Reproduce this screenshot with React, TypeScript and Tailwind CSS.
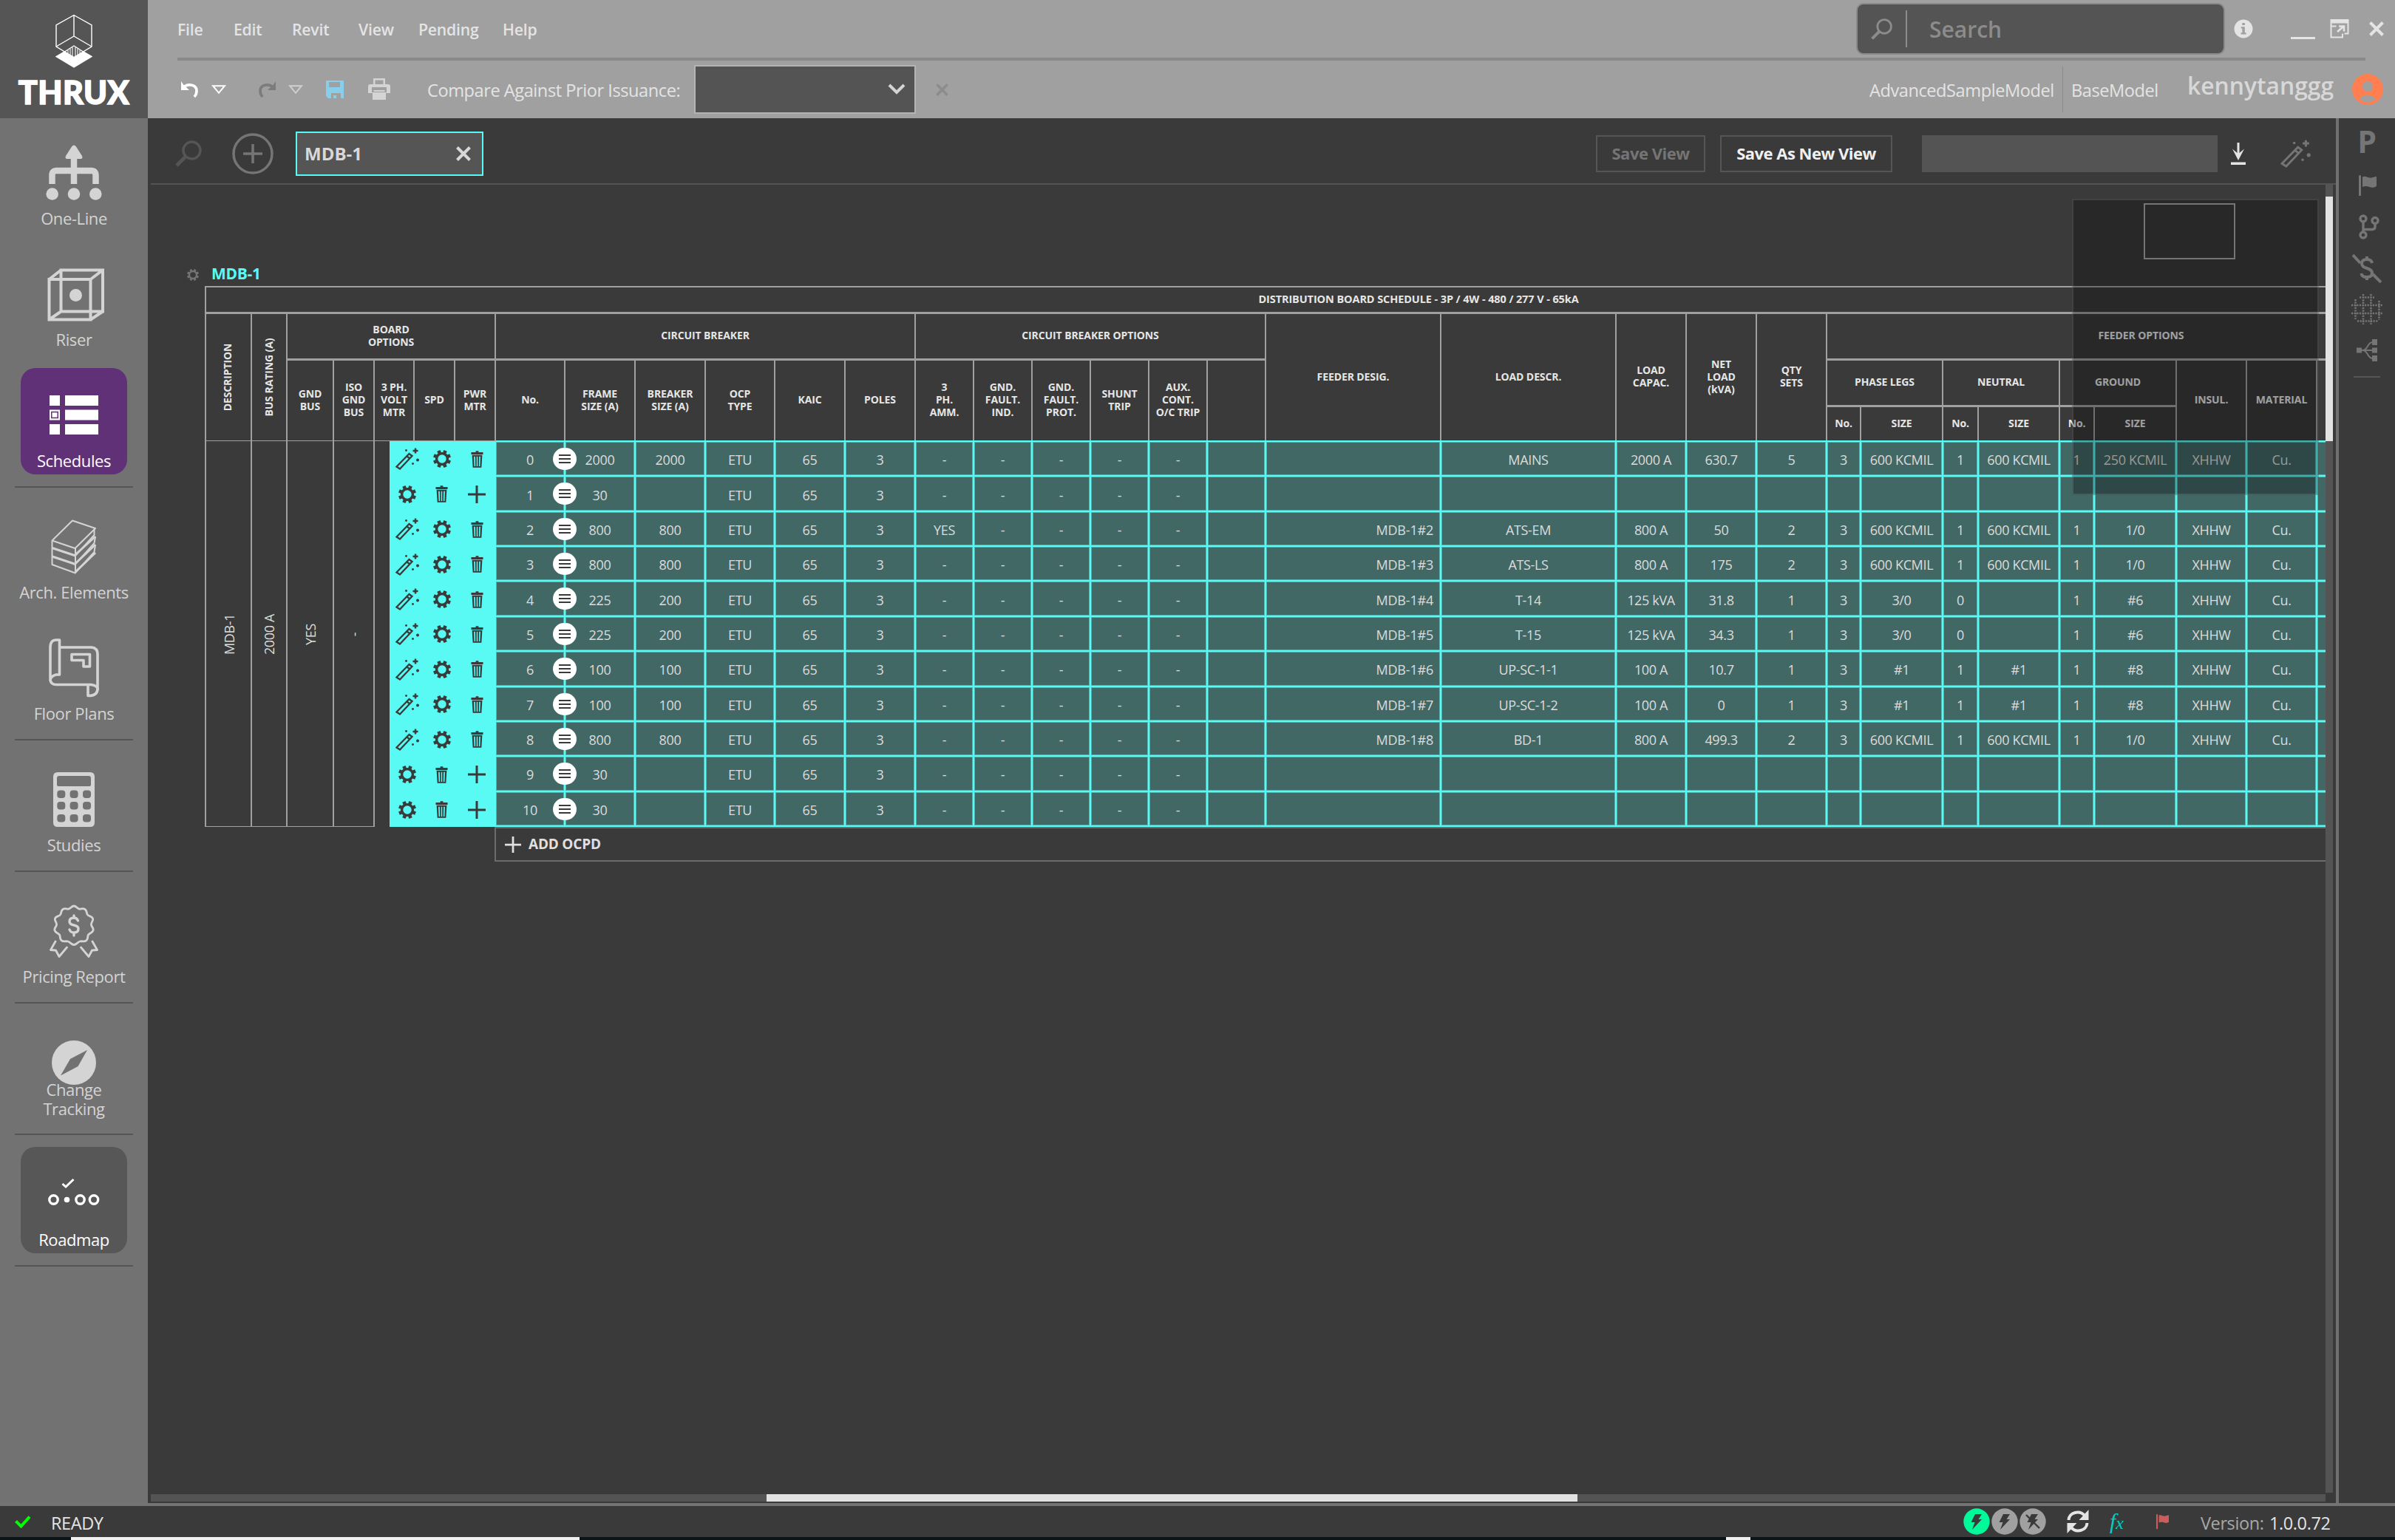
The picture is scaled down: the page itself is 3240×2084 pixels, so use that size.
import type { ReactNode } from "react";
import clsx from "clsx";

type IconProps = { className?: string };

function WandIcon({ className }: IconProps) {
  return (
    <svg viewBox="0 0 32 30" className={className} fill="none" stroke="currentColor" strokeWidth="2.300">
      <path d="M1.500 25.500 18.500 8l4 3L6 28.500Z" />
      <path d="m15.500 11.500 4 3" />
      <path d="M27 .5v7M23.500 4h7" strokeWidth="2.400" />
      <circle cx="30" cy="16.500" r="2" fill="currentColor" stroke="none" />
      <circle cx="23.500" cy="21.500" r="1.400" fill="currentColor" stroke="none" />
      <circle cx="14.500" cy="3.500" r="1.400" fill="currentColor" stroke="none" />
    </svg>
  );
}

function GearIcon({ className }: IconProps) {
  return (
    <svg viewBox="0 0 24 24" className={className} fill="none" stroke="currentColor">
      <circle cx="12" cy="12" r="7.400" strokeWidth="3.400" />
      <g strokeWidth="4.600">
        <path d="M12 0v4M12 20v4M0 12h4M20 12h4" transform="rotate(22.500 12 12)" />
        <path d="M12 0v4M12 20v4M0 12h4M20 12h4" transform="rotate(67.500 12 12)" />
      </g>
    </svg>
  );
}

function TrashIcon({ className }: IconProps) {
  return (
    <svg viewBox="0 0 18 24" className={className} fill="currentColor">
      <path d="M7 0h4v2h6.500v3H.5V2H7Z" />
      <path d="M1.700 6h14.600l-1.100 18H2.800Zm2.600 2 .6 14h1.600L6.200 8Zm3.900 0v14h1.600V8Zm3.600 0-.3 14h1.600l.6-14Z" fillRule="evenodd" />
    </svg>
  );
}

function PlusIcon({ className }: IconProps) {
  return (
    <svg viewBox="0 0 24 24" className={className} stroke="currentColor" strokeWidth="3">
      <path d="M12 0v24M0 12h24" />
    </svg>
  );
}

function CloseIcon({ className }: IconProps) {
  return (
    <svg viewBox="0 0 20 20" className={className} stroke="currentColor" strokeWidth="4">
      <path d="m1.500 1.500 17 17M18.500 1.500l-17 17" />
    </svg>
  );
}

function SearchIcon({ className }: IconProps) {
  return (
    <svg viewBox="0 0 36 36" className={className} fill="none" stroke="currentColor">
      <circle cx="22.500" cy="13.500" r="11.500" strokeWidth="3.500" />
      <path d="M14 22 2 34" strokeWidth="5" />
    </svg>
  );
}

function FlagIcon({ className }: IconProps) {
  return (
    <svg viewBox="0 0 24 28" className={className} fill="currentColor">
      <path d="M0 1.500a1.500 1.500 0 0 1 3 0V27a1 1 0 0 1-3 0ZM5 2.500C9 0 12.500 4.500 17 3.500L24 1.800V15c-5 3-8 1.500-11 .5s-5-.5-8 .5Z" />
    </svg>
  );
}

function UndoIcon({ className }: IconProps) {
  return (
    <svg viewBox="0 0 24 22" className={className} fill="none" stroke="currentColor">
      <path d="M3 8.500C10 2 21 5 21 13c0 3-1.200 6-3.200 8" strokeWidth="3.600" />
      <path d="M0 0v12h11L7.500 8.500 3.500 5Z" fill="currentColor" stroke="none" />
    </svg>
  );
}

function LogoIcon() {
  return (
    <svg viewBox="0 0 50 74" className="h-[74px] w-[50px]" fill="none" stroke="#fff" strokeWidth="1.400">
      <path d="M25 1.500 49 15v29L25 58.500 1 44V15Z" />
      <path d="M25 1.500V30M1 44l24-14 24 14" />
      <path d="M1 57.500 12 51l13 8 13-8 11 6.500L25 72Z" fill="#fff" stroke="#fff" />
      <path d="m12.500 51 12.500-8 12.500 8" />
      <path d="M17 49v5M20 47v9M23 45v12M27 45v12M30 47v9M33 49v5" strokeWidth="1.100" />
    </svg>
  );
}

function OneLineIcon() {
  return (
    <svg viewBox="0 0 76 76" className="h-[76px] w-[76px]" fill="currentColor">
      <path d="M35.300 2q2.700-3 5.400 0l8.300 13q1.500 4-2.500 4h-17q-4 0-2.500-4Z" />
      <path d="M38 15v38M8.500 53V41q0-6 6-6h47q6 0 6 6v12" fill="none" stroke="currentColor" strokeWidth="8.500" />
      <circle cx="8.700" cy="66.500" r="8.300" />
      <circle cx="38" cy="66.500" r="8.300" />
      <circle cx="67.300" cy="66.500" r="8.300" />
    </svg>
  );
}

function RiserIcon() {
  return (
    <svg viewBox="0 0 78 74" className="mt-[4px] ml-[6px] h-[74px] w-[78px]" fill="none" stroke="currentColor" strokeWidth="4">
      <path d="M2.500 15h56v54.500h-56ZM18.500 2.500H75v56H18.500ZM2.500 15l16-12.500M58.500 15 75 2.500M2.500 69.500l16-11M58.500 69.500l16.500-11" />
      <circle cx="38.500" cy="36.500" r="8.500" fill="currentColor" stroke="none" />
    </svg>
  );
}

function SchedulesIcon() {
  return (
    <svg viewBox="0 0 66 54" className="h-[54px] w-[66px]" fill="currentColor">
      <path d="M0 0h14v14H0ZM21 0h45v14H21ZM21 19.500h45v14H21ZM0 39h14v14H0ZM21 39h45v14H21Z" />
      <path d="M0 19.500h14v14H0Zm2 2.200v9.600h10v-9.600Z" fillRule="evenodd" />
      <path d="M3.500 23.300h7v6.400h-7Z" />
    </svg>
  );
}

function ArchIcon() {
  return (
    <svg viewBox="0 0 62 74" className="h-[74px] w-[62px]" fill="none" stroke="currentColor" strokeWidth="2" strokeLinejoin="round">
      <path d="M29 1.500 60 12 32.500 39 1.500 28.500ZM1.500 28.500V61L33 72.500V39" />
      <path d="M1.500 38.500 33 49M1.500 50 33 60.500" strokeWidth="3.200" />
      <path d="M58.500 13v8L33 49M60 23l-1.500 9L33 60.500M60 34l-1.500 10L33 72" />
      <path d="M60 23 33 47.500M60 34 33 59.500M60 45 33 71" strokeWidth="3" />
    </svg>
  );
}

function FloorIcon() {
  return (
    <svg viewBox="0 0 68 80" className="h-[80px] w-[68px]" fill="none" stroke="currentColor" strokeWidth="3.600" strokeLinejoin="round">
      <path d="M14.500 2v47H10Q2 51 2 57V12Q2 2 10 2ZM2 56Q3 62.500 10 62.500h47q9 1 9.500 7" />
      <path d="M14.500 12H58q8 1 8 9v48q-1 9-13 8.500V63" />
      <path d="M31 21.500h24.500V38H47v-8.500H31Z" />
    </svg>
  );
}

function StudiesIcon() {
  return (
    <svg viewBox="0 0 56 74" className="h-[74px] w-[56px]" fill="currentColor">
      <path
        d="M6 0h44q6 0 6 6v62q0 6-6 6H6q-6 0-6-6V6q0-6 6-6Zm2 5Q5 5 5 8v9q0 2 3 2h40q3 0 3-2V8q0-3-3-3Z"
        fillRule="evenodd"
      />
      <g fill="#727272">
        {[24.500, 40, 57].map((y) =>
          [5.300, 22.600, 40].map((x) => <rect key={`${x}-${y}`} x={x} y={y} width="11" height="10.500" rx="4" />)
        )}
      </g>
    </svg>
  );
}

function PricingIcon() {
  return (
    <svg viewBox="0 0 66 72" className="h-[72px] w-[66px]" fill="none" stroke="currentColor" strokeWidth="2.800" strokeLinecap="round" strokeLinejoin="round">
      <path d="M33 2c3.500 0 4 3.500 7 4s5-1.500 8 .5 1.500 5 3.500 7.500 6 1.500 7 5-2.500 5-2 8.500 3.500 4 2.500 7.500-5 3.500-6.500 6 0 6-3 8-5 0-8.500 1-4.500 4.500-8 4.500-4.500-3.500-8-4.500-5.500 1-8.500-1-1.500-5.500-3-8-5.500-2.500-6.500-6 2-4 2.500-7.500-3-5-2-8.500 5-2.500 7-5 .5-5.500 3.500-7.500 5 0 8-.5 3.500-4 7-4Z" />
      <path d="M38.500 22q-1.500-4-5.500-4-6 0-6 5 0 4 6 5t6 5q0 5-6 5-4.500 0-6-4M33 15v3M33 38v4" strokeWidth="3.400" />
      <path d="M8 50 1.500 61.500l7 .5 4.500 8.500L23.500 58M58 50l6.500 11.500-7 .5-4.500 8.500L42.500 58" />
    </svg>
  );
}

function CompassIcon() {
  return (
    <svg viewBox="0 0 60 60" className="h-[60px] w-[60px]">
      <circle cx="30" cy="30" r="30" fill="currentColor" />
      <path d="M48 13 35.500 35 12 47.500 25 25Z" fill="#727272" />
    </svg>
  );
}

function RoadmapIcon() {
  return (
    <svg viewBox="0 0 70 38" className="-mt-[6px] h-[38px] w-[70px]" fill="none" stroke="currentColor">
      <path d="m19.500 8 4.500 4L34.500 2" strokeWidth="3" />
      <circle cx="7.500" cy="29.500" r="5.700" strokeWidth="3.400" />
      <circle cx="25.500" cy="29.500" r="3.800" fill="currentColor" stroke="none" />
      <circle cx="43.500" cy="29.500" r="5.700" strokeWidth="3.400" />
      <circle cx="62" cy="29.500" r="5.700" strokeWidth="3.400" />
    </svg>
  );
}

function NavItem({ label, icon, tone, lines = 1 }: { label: string; icon: ReactNode; tone?: "active" | "dim"; lines?: number }) {
  return (
    <div
      className={clsx(
        "mx-[28px] my-[10px] flex h-[144px] flex-col items-center rounded-[20px]",
        tone === "active" && "bg-[#613178] text-white",
        tone === "dim" && "bg-[#575757] text-white",
        !tone && "text-[#d4d4d4]"
      )}
    >
      <div className="flex h-[128px] w-full shrink-0 items-center justify-center">{icon}</div>
      <p
        className={clsx(
          "w-[160px] shrink-0 text-center text-[22px] tracking-[-0.4px]",
          lines === 2 ? "-mt-[41px] px-[20px] leading-[26px]" : "-mt-[17px] leading-[28px]"
        )}
      >
        {label}
      </p>
    </div>
  );
}

function NavRule() {
  return <div className="mx-[20px] my-[6px] h-[2px] bg-[#555555]" />;
}

function Sidebar() {
  return (
    <nav className="flex w-[200px] shrink-0 flex-col bg-[#727272]">
      <NavItem label="One-Line" icon={<OneLineIcon />} />
      <NavItem label="Riser" icon={<RiserIcon />} />
      <NavItem label="Schedules" icon={<SchedulesIcon />} tone="active" />
      <NavRule />
      <NavItem label="Arch. Elements" icon={<ArchIcon />} />
      <NavItem label="Floor Plans" icon={<FloorIcon />} />
      <NavRule />
      <NavItem label="Studies" icon={<StudiesIcon />} />
      <NavRule />
      <NavItem label="Pricing Report" icon={<PricingIcon />} />
      <NavRule />
      <NavItem label="Change Tracking" icon={<CompassIcon />} lines={2} />
      <NavRule />
      <NavItem label="Roadmap" icon={<RoadmapIcon />} tone="dim" />
      <NavRule />
    </nav>
  );
}

function MenuBar() {
  return (
    <div className="flex h-[78px] items-center">
      <div className="flex w-[2271px] pt-px text-[21.200px] font-semibold tracking-[-0.2px] text-[#e4e4e4]">
        <span className="w-[76px]">File</span>
        <span className="w-[79px]">Edit</span>
        <span className="w-[90px]">Revit</span>
        <span className="w-[81px]">View</span>
        <span className="w-[114px]">Pending</span>
        <span>Help</span>
      </div>
      <div className="flex h-[70px] w-[499px] items-center rounded-[10px] border-2 border-[#8a8a8a] bg-[#545454] text-[#8c8c8c]">
        <SearchIcon className="ml-[18px] h-[29px] w-[29px]" />
        <div className="ml-[18px] h-[50px] w-[2px] bg-[#8c8c8c]" />
        <span className="ml-[30px] text-[30px] font-semibold">Search</span>
      </div>
      <div className="ml-[12px] flex items-center text-[#e4e4e4]">
        <svg viewBox="0 0 26 26" className="h-[26px] w-[26px]">
          <circle cx="13" cy="13" r="12.500" fill="currentColor" />
          <path d="M11.300 5h3.600v3h-3.600ZM9.800 10.300h5v8h1.800v2.200H9.600v-2.200h1.800v-5.700H9.800Z" fill="#a0a0a0" />
        </svg>
        <div className="mt-[25px] ml-[51px] h-[3px] w-[33px] bg-[#e4e4e4]" />
        <svg viewBox="0 0 26 26" className="ml-[20px] h-[26px] w-[26px]" fill="none" stroke="currentColor" strokeWidth="2">
          <path d="M1.500 9V1h23v18.500h-5" />
          <path d="M1 3h24" strokeWidth="5" />
          <path d="M8.500 9.500h-7v15H17v-5" />
          <path d="m10 17 8-7M12 9.500h7v7" strokeWidth="2.600" />
        </svg>
        <CloseIcon className="ml-[27px] h-[20px] w-[20px]" />
      </div>
    </div>
  );
}

function Triangle({ className }: IconProps) {
  return (
    <svg viewBox="0 0 20 13" className={className} fill="none" stroke="currentColor" strokeWidth="2">
      <path d="M2 1.200h16l-8 9.600Z" />
    </svg>
  );
}

function ToolBar() {
  return (
    <div className="flex h-[78px] items-center text-[23.600px] tracking-[-0.45px] text-[#e4e4e4]">
      <UndoIcon className="ml-[5px] h-[22px] w-[24px] text-white" />
      <Triangle className="ml-[17px] h-[13px] w-[20px] text-white" />
      <UndoIcon className="ml-[43px] h-[22px] w-[24px] -scale-x-100 text-[#7c7c7c]" />
      <Triangle className="ml-[17px] h-[13px] w-[20px] text-[#cfcfcf]" />
      <svg viewBox="0 0 24 24" className="ml-[31px] h-[24px] w-[24px]" fill="#87ceeb">
        <path d="M0 0h24v24h-4v-7H7v7H3l-3-3Zm4 2v7h15V2Z" fillRule="evenodd" />
        <path d="M10 20h4v4h-4Z" />
      </svg>
      <svg viewBox="0 0 30 30" className="ml-[33px] h-[30px] w-[30px]" fill="#d4d4d4">
        <path d="M7 0h16v8h4q3 0 3 3v9h-6v9H6v-9H0v-9q0-3 3-3h4Zm2.500 2.500V8h11V2.500ZM5 12v7h20v-7Z" fillRule="evenodd" />
        <path d="M7.500 16h15v2h-15Z" />
      </svg>
      <span className="ml-[50px] w-[361px] pt-[3px]">Compare Against Prior Issuance:</span>
      <div className="flex h-[66px] w-[300px] items-center justify-end border-2 border-[#b4b4b4] bg-[#545454] pr-[12px]">
        <svg viewBox="0 0 24 16" className="h-[16px] w-[24px]" fill="none" stroke="#d4d4d4" strokeWidth="4">
          <path d="m2 2 10 10L22 2" />
        </svg>
      </div>
      <CloseIcon className="ml-[27px] h-[17px] w-[17px] text-[#8c8c8c]" />
      <span className="ml-[1246px] w-[261px] pt-[3px]">AdvancedSampleModel</span>
      <div className="h-[62px] w-px bg-[#8a8a8a]" />
      <span className="ml-[11px] w-[157px] pt-[3px]">BaseModel</span>
      <span className="-mt-[10px] w-[223px] text-[31.800px] font-semibold tracking-normal text-[#d8d8d8]">kennytanggg</span>
      <svg viewBox="0 0 42 42" className="h-[42px] w-[42px]">
        <circle cx="21" cy="21" r="21" fill="#ff7f50" />
        <circle cx="21" cy="17" r="7" fill="#a0a0a0" />
        <path d="M10 34q5-6 11-5.500T32 34q-5 4.500-11 4.500T10 34Z" fill="#a0a0a0" />
      </svg>
    </div>
  );
}

function Header() {
  return (
    <header className="flex h-[160px] shrink-0 bg-[#a0a0a0]">
      <div className="flex w-[200px] flex-col items-center bg-[#555555] pt-[19px] text-white">
        <LogoIcon />
        <span className="mt-[10px] font-['Lato'] text-[43px] leading-[44px] font-black tracking-[0.5px] [-webkit-text-stroke:1.5px_white]">THRUX</span>
      </div>
      <div className="flex w-[3040px] flex-col pl-[40px]">
        <MenuBar />
        <div className="h-[4px] w-[2960px] bg-[#898989]" />
        <ToolBar />
      </div>
    </header>
  );
}

function ViewBar() {
  return (
    <div className="flex h-[88px] w-[2948px] shrink-0 items-center pt-[8px] pl-[33px] text-[22px] font-bold tracking-[-0.5px]">
      <SearchIcon className="h-[36px] w-[36px] text-[#555555]" />
      <svg viewBox="0 0 56 56" className="ml-[41px] h-[56px] w-[56px]" fill="none" stroke="#757575" strokeWidth="3.500">
        <circle cx="28" cy="28" r="26" />
        <path d="M28 15v26M15 28h26" />
      </svg>
      <div className="ml-[30px] flex h-[60px] w-[254px] items-center border-2 border-[#58faf3] bg-[#555555] pl-[10px] text-[#d8d8d8]">
        <span className="w-[205px] pb-px text-[24px] tracking-normal">MDB-1</span>
        <CloseIcon className="h-[20px] w-[20px]" />
      </div>
      <div className="ml-[1505px] flex h-[50px] w-[148px] items-center justify-center border-2 border-[#555555] pb-px text-[#757575]">Save View</div>
      <div className="ml-[20px] flex h-[50px] w-[233px] items-center justify-center border-2 border-[#555555] pb-px text-[#f0f0f0]">Save As New View</div>
      <div className="ml-[40px] h-[50px] w-[400px] bg-[#545454]" />
      <svg viewBox="0 0 20 30" className="ml-[18px] h-[30px] w-[20px]" fill="#e4e4e4">
        <path d="M8.500 0h3v14l6.500-5.500L10 24 2 8.500 8.500 14ZM0 26.500h20V30H0Z" />
      </svg>
      <WandIcon className="ml-[47px] h-[38px] w-[41px] text-[#757575]" />
    </div>
  );
}

const HEADERS = [
  { text: "BOARD\nOPTIONS", cell: "col-start-3 col-span-5 row-start-1" },
  { text: "GND\nBUS", cell: "col-start-3 row-start-2 row-span-2" },
  { text: "ISO\nGND\nBUS", cell: "col-start-4 row-start-2 row-span-2" },
  { text: "3 PH.\nVOLT\nMTR", cell: "col-start-5 row-start-2 row-span-2" },
  { text: "SPD", cell: "col-start-6 row-start-2 row-span-2" },
  { text: "PWR\nMTR", cell: "col-start-7 row-start-2 row-span-2" },
  { text: "CIRCUIT BREAKER", cell: "col-start-8 col-span-6 row-start-1" },
  { text: "No.", cell: "col-start-8 row-start-2 row-span-2" },
  { text: "FRAME\nSIZE (A)", cell: "col-start-9 row-start-2 row-span-2" },
  { text: "BREAKER\nSIZE (A)", cell: "col-start-10 row-start-2 row-span-2" },
  { text: "OCP\nTYPE", cell: "col-start-11 row-start-2 row-span-2" },
  { text: "KAIC", cell: "col-start-12 row-start-2 row-span-2" },
  { text: "POLES", cell: "col-start-13 row-start-2 row-span-2" },
  { text: "CIRCUIT BREAKER OPTIONS", cell: "col-start-14 col-span-6 row-start-1" },
  { text: "3\nPH.\nAMM.", cell: "col-start-14 row-start-2 row-span-2" },
  { text: "GND.\nFAULT.\nIND.", cell: "col-start-15 row-start-2 row-span-2" },
  { text: "GND.\nFAULT.\nPROT.", cell: "col-start-16 row-start-2 row-span-2" },
  { text: "SHUNT\nTRIP", cell: "col-start-17 row-start-2 row-span-2" },
  { text: "AUX.\nCONT.\nO/C TRIP", cell: "col-start-18 row-start-2 row-span-2" },
  { text: "", cell: "col-start-19 row-start-2 row-span-2" },
  { text: "FEEDER DESIG.", cell: "col-start-20 row-start-1 row-span-3" },
  { text: "LOAD DESCR.", cell: "col-start-21 row-start-1 row-span-3" },
  { text: "LOAD\nCAPAC.", cell: "col-start-22 row-start-1 row-span-3" },
  { text: "NET\nLOAD\n(kVA)", cell: "col-start-23 row-start-1 row-span-3" },
  { text: "QTY\nSETS", cell: "col-start-24 row-start-1 row-span-3" },
  { text: "FEEDER OPTIONS", cell: "col-start-25 col-span-9 row-start-1" },
  { text: "PHASE LEGS", cell: "col-start-25 col-span-2 row-start-2" },
  { text: "No.", cell: "col-start-25 row-start-3" },
  { text: "SIZE", cell: "col-start-26 row-start-3" },
  { text: "NEUTRAL", cell: "col-start-27 col-span-2 row-start-2" },
  { text: "No.", cell: "col-start-27 row-start-3" },
  { text: "SIZE", cell: "col-start-28 row-start-3" },
  { text: "GROUND", cell: "col-start-29 col-span-2 row-start-2" },
  { text: "No.", cell: "col-start-29 row-start-3" },
  { text: "SIZE", cell: "col-start-30 row-start-3" },
  { text: "INSUL.", cell: "col-start-31 row-start-2 row-span-2" },
  { text: "MATERIAL", cell: "col-start-32 row-start-2 row-span-2" },
  { text: "", cell: "col-start-33 row-start-2 row-span-2" },
];

type Circuit = {
  no: number;
  frame: string;
  breaker?: string;
  phAmm?: string;
  desig?: string;
  load?: string[];
  feeder?: string[];
};

// load: description, capacity, net kVA, qty sets
// feeder: phase no/size, neutral no/size, ground no/size, insulation, material
const CIRCUITS: Circuit[] = [
  { no: 0, frame: "2000", breaker: "2000", load: ["MAINS", "2000 A", "630.7", "5"], feeder: ["3", "600 KCMIL", "1", "600 KCMIL", "1", "250 KCMIL", "XHHW", "Cu."] },
  { no: 1, frame: "30" },
  { no: 2, frame: "800", breaker: "800", phAmm: "YES", desig: "MDB-1#2", load: ["ATS-EM", "800 A", "50", "2"], feeder: ["3", "600 KCMIL", "1", "600 KCMIL", "1", "1/0", "XHHW", "Cu."] },
  { no: 3, frame: "800", breaker: "800", desig: "MDB-1#3", load: ["ATS-LS", "800 A", "175", "2"], feeder: ["3", "600 KCMIL", "1", "600 KCMIL", "1", "1/0", "XHHW", "Cu."] },
  { no: 4, frame: "225", breaker: "200", desig: "MDB-1#4", load: ["T-14", "125 kVA", "31.8", "1"], feeder: ["3", "3/0", "0", "", "1", "#6", "XHHW", "Cu."] },
  { no: 5, frame: "225", breaker: "200", desig: "MDB-1#5", load: ["T-15", "125 kVA", "34.3", "1"], feeder: ["3", "3/0", "0", "", "1", "#6", "XHHW", "Cu."] },
  { no: 6, frame: "100", breaker: "100", desig: "MDB-1#6", load: ["UP-SC-1-1", "100 A", "10.7", "1"], feeder: ["3", "#1", "1", "#1", "1", "#8", "XHHW", "Cu."] },
  { no: 7, frame: "100", breaker: "100", desig: "MDB-1#7", load: ["UP-SC-1-2", "100 A", "0", "1"], feeder: ["3", "#1", "1", "#1", "1", "#8", "XHHW", "Cu."] },
  { no: 8, frame: "800", breaker: "800", desig: "MDB-1#8", load: ["BD-1", "800 A", "499.3", "2"], feeder: ["3", "600 KCMIL", "1", "600 KCMIL", "1", "1/0", "XHHW", "Cu."] },
  { no: 9, frame: "30" },
  { no: 10, frame: "30" },
];

const DESIG_COLUMN = 12;

function circuitCells(c: Circuit) {
  return [
    String(c.no),
    c.frame,
    c.breaker ?? "",
    "ETU",
    "65",
    "3",
    c.phAmm ?? "-",
    "-",
    "-",
    "-",
    "-",
    "",
    c.desig ?? "",
    ...(c.load ?? ["", "", "", ""]),
    ...(c.feeder ?? ["", "", "", "", "", "", "", ""]),
    "",
  ];
}

function VerticalCell({ children, className }: { children?: ReactNode; className?: string }) {
  return (
    <div className={clsx("flex items-center justify-center bg-[#3a3a3a]", className)}>
      <span className="-rotate-90 whitespace-nowrap">{children}</span>
    </div>
  );
}

function TableHead() {
  return (
    <div className="grid w-[3046px] grid-cols-[60px_46px_61px_53px_52px_53px_53px_92px_93px_93px_92px_93px_93px_77px_77px_77px_77px_77px_77px_235px_235px_93px_93px_93px_44px_109px_46px_108px_45px_109px_93px_93px_186px] grid-rows-[60px_60px_45px] gap-x-[2px] gap-y-[3px] bg-[#a0a0a0] pl-[2px] text-[14px] leading-[17px] font-bold tracking-[-0.1px] text-[#e6e6e6]">
      <VerticalCell className="col-start-1 row-span-3 row-start-1 pr-[2px]">DESCRIPTION</VerticalCell>
      <VerticalCell className="col-start-2 row-span-3 row-start-1">BUS RATING (A)</VerticalCell>
      {HEADERS.map((h, i) => (
        <div key={i} className={clsx("flex items-center justify-center bg-[#3a3a3a] pb-[3px] text-center whitespace-pre", h.cell)}>
          {h.text}
        </div>
      ))}
    </div>
  );
}

function RowActions({ spare }: { spare: boolean }) {
  return (
    <div className="flex items-center pt-px text-[#3a3a3a]">
      <div className="flex w-[47px] justify-center">
        {spare ? <GearIcon className="h-[24px] w-[24px]" /> : <WandIcon className="h-[30px] w-[32px]" />}
      </div>
      <div className="flex w-[47px] justify-center">
        {spare ? <TrashIcon className="h-[23px] w-[17px]" /> : <GearIcon className="h-[24px] w-[24px]" />}
      </div>
      <div className="flex w-[48px] justify-center">
        {spare ? <PlusIcon className="h-[24px] w-[24px]" /> : <TrashIcon className="h-[23px] w-[17px]" />}
      </div>
    </div>
  );
}

function TableBody() {
  return (
    <div className="flex h-[523px] text-[18px] tracking-[-0.35px] text-[#dcdcdc]">
      <div className="grid shrink-0 grid-cols-[60px_46px_61px_53px_164px] gap-x-[2px] bg-[#a0a0a0] pt-px pb-px pl-[2px]">
        <VerticalCell className="pt-[2px] pl-[4px]">MDB-1</VerticalCell>
        <VerticalCell className="pt-[2px] pl-[2px]">2000 A</VerticalCell>
        <VerticalCell className="pt-[2px] pl-[2px]">YES</VerticalCell>
        <VerticalCell className="pt-[2px] pl-[2px]">-</VerticalCell>
        <div className="-mb-px bg-[#3a3a3a] pl-[20px]">
          <div className="grid h-full w-[144px] grid-rows-[repeat(11,1fr)] bg-[#58faf3]">
            {CIRCUITS.map((c) => (
              <RowActions key={c.no} spare={!c.load} />
            ))}
          </div>
        </div>
      </div>
      <div className="grid h-[523px] shrink-0 grid-cols-[92px_93px_93px_92px_93px_93px_77px_77px_77px_77px_77px_77px_235px_235px_93px_93px_93px_44px_109px_46px_108px_45px_109px_93px_93px_186px] grid-rows-[repeat(11,1fr)] gap-[2px] bg-[#58faf3] py-[2px]">
        {CIRCUITS.map((c) =>
          circuitCells(c).map((text, col) => (
            <div
              key={`${c.no}-${col}`}
              className={clsx(
                "relative flex items-center border border-[#4fb4b0] bg-[#426866] pt-[4px] whitespace-nowrap",
                col === DESIG_COLUMN ? "justify-end pr-[8px] tracking-[-0.2px]" : "justify-center"
              )}
            >
              {text}
              {col === 0 && (
                <div className="absolute top-[7px] -right-[18px] z-10 flex h-[30px] w-[32px] flex-col items-center justify-center gap-[3px] rounded-full bg-white">
                  <i className="h-[2px] w-[16px] bg-[#3a3a3a]" />
                  <i className="h-[2px] w-[16px] bg-[#3a3a3a]" />
                  <i className="h-[2px] w-[16px] bg-[#3a3a3a]" />
                </div>
              )}
            </div>
          ))
        )}
      </div>
    </div>
  );
}

function Schedule() {
  return (
    <section className="ml-[73px] w-[2869px] overflow-hidden pt-[109px]">
      <div className="flex h-[28px] items-center pb-[5px]">
        <span className="pl-[9px] text-[21px] leading-none font-bold tracking-[-0.3px] text-[#58faf3]">MDB-1</span>
      </div>
      <div className="flex h-[38px] w-[3284px] items-center justify-center border-2 border-b-3 border-[#a0a0a0] pb-px text-[14.500px] font-bold tracking-[-0.1px] text-[#e6e6e6]">
        DISTRIBUTION BOARD SCHEDULE - 3P / 4W - 480 / 277 V - 65kA
      </div>
      <TableHead />
      <TableBody />
      <div className="ml-[392px] flex h-[47px] items-center border-y-2 border-l-2 border-[#6c6c6c] pl-[12px] text-[19px] font-bold tracking-[-0.2px] text-[#e0e0e0]">
        <PlusIcon className="mr-[10px] h-[22px] w-[22px]" />
        ADD OCPD
      </div>
    </section>
  );
}

function Canvas() {
  return (
    <div className="relative flex h-[1786px] w-[2956px] flex-col border-t-2 border-[#545454]">
      <div className="flex flex-1">
        <div className="relative h-[1772px] w-[2942px] overflow-hidden">
          <GearIcon className="absolute top-[114px] left-[49px] h-[16px] w-[16px] text-[#757575]" />
          <Schedule />
          <div className="absolute top-[19px] left-[2599px] h-[401px] w-[334px] border-2 border-white/12 bg-black/30 pt-[4px] pl-[95px]">
            <div className="h-[76px] w-[124px] border-2 border-[#757575]" />
          </div>
        </div>
        <div className="h-[1770px] w-[10px] bg-[#545454] pt-[16px]">
          <div className="h-[331px] bg-[#e2e2e2]" />
        </div>
      </div>
      <div className="h-[10px] w-[2942px] bg-[#545454] pl-[833px]">
        <div className="h-[10px] w-[1097px] bg-[#e2e2e2]" />
      </div>
      <div className="h-[4px]" />
    </div>
  );
}

function RightRail() {
  return (
    <aside className="flex w-[80px] shrink-0 flex-col items-center border-l-4 border-[#707070] pt-[15px] text-[#757575]">
      <span className="text-[41px] leading-[32px] font-bold">P</span>
      <FlagIcon className="mt-[30px] ml-[2px] h-[28px] w-[24px]" />
      <svg viewBox="0 0 28 34" className="mt-[25px] ml-[6px] h-[34px] w-[28px]" fill="none" stroke="currentColor" strokeWidth="3.400">
        <circle cx="6" cy="6" r="4" />
        <circle cx="6" cy="28" r="4" />
        <circle cx="22" cy="8.500" r="4" />
        <path d="M6 10v14M22 12.500V17q0 3.500-4 3.500H6" />
      </svg>
      <svg viewBox="0 0 40 40" className="mt-[19px] h-[40px] w-[40px]" fill="none" stroke="currentColor">
        <path d="m1 2 10 11M28 28l11 11" strokeWidth="4" />
        <path d="M27 13q-1-5-7-5-7 0-7 5.500 0 4.500 7 6.500t7 6.500q0 5.500-7 5.500-7 0-7.500-5M20 4v4M20 32v4" strokeWidth="4" />
      </svg>
      <svg viewBox="0 0 42 42" className="mt-[14px] h-[42px] w-[42px]" fill="none" stroke="currentColor" strokeWidth="2.600" strokeDasharray="2.200 1.400">
        <path d="M16 1v41M26.500 1v41M0 16h42M0 27h42M5.500 8v27M37.500 10v26M11 5.500h20M8 37.500h28" />
      </svg>
      <svg viewBox="0 0 28 30" className="mt-[20px] h-[30px] w-[28px]" fill="currentColor">
        <path d="M0 11.500h7v7H0ZM21 0h7v8h-7ZM21 11.500h7v7h-7ZM21 22h7v8h-7Z" />
        <path d="M6 15h16M8 15c8 0 6-11 14-11M8 15c8 0 6 11 14 11" fill="none" stroke="currentColor" strokeWidth="2" />
      </svg>
      <div className="mt-[20px] h-[2px] w-[36px] bg-[#555555]" />
    </aside>
  );
}

function BoltBadge({ fill, off }: { fill: string; off?: boolean }) {
  return (
    <svg viewBox="0 0 36 36" className="h-[36px] w-[36px]">
      <circle cx="18" cy="18" r="17.700" fill={fill} />
      <path d="M16 8h9l-4.500 7H25L12 29l3.500-10h-5Z" fill="#3a3a3a" />
      {off && <path d="m9 9 18 18" stroke="#3a3a3a" strokeWidth="2.400" />}
    </svg>
  );
}

function StatusBar() {
  return (
    <footer className="flex h-[46px] shrink-0 items-center border-t-4 border-[#747474] text-[23.500px] tracking-[-0.4px] text-[#e4e4e4]">
      <svg viewBox="0 0 22 17" className="ml-[20px] h-[17px] w-[22px]" fill="none" stroke="#00ff00" strokeWidth="4">
        <path d="m1.500 7.500 7 7L20 1.500" />
      </svg>
      <span className="ml-[27px] w-[2587px] pt-[5px]">READY</span>
      <div className="flex gap-[2px]">
        <BoltBadge fill="#00fa9a" />
        <BoltBadge fill="#a0a0a0" />
        <BoltBadge fill="#a0a0a0" off />
      </div>
      <svg viewBox="0 0 30 32" className="ml-[28px] h-[32px] w-[30px]" fill="none" stroke="currentColor" strokeWidth="4">
        <path d="M2.500 14C3 3 18 0 24.500 8.500" />
        <path d="M27.500 18C27 29 12 32 5.500 23.500" />
        <path d="M29.500 0v14h-13ZM.5 32V18h13Z" fill="currentColor" stroke="none" />
      </svg>
      <span className="ml-[28px] w-[63px] font-['Liberation_Serif'] text-[30px] leading-none tracking-normal text-[#00d0c2] italic">
        f<span className="text-[24px]">x</span>
      </span>
      <FlagIcon className="h-[22px] w-[17px] text-[#cd5c5c]" />
      <span className="ml-[43px] w-[93px] pt-[5px] text-[#a8a8a8]">Version:</span>
      <span className="pt-[5px]">1.0.0.72</span>
    </footer>
  );
}

export default function App() {
  return (
    <div className="flex h-[2084px] w-[3240px] flex-col overflow-hidden bg-[#3a3a3a] font-['Open_Sans','Noto_Sans',sans-serif]">
      <Header />
      <div className="flex h-[1874px] shrink-0">
        <Sidebar />
        <main className="flex w-[2960px] flex-col pl-[4px]">
          <ViewBar />
          <Canvas />
        </main>
        <RightRail />
      </div>
      <StatusBar />
      <div className="flex h-[4px] bg-[#0c1418]">
        <div className="ml-[96px] h-[4px] w-[688px] bg-[#f0f0f0]" />
        <div className="ml-[1551px] h-[4px] w-[33px] bg-[#f0f0f0]" />
      </div>
    </div>
  );
}
